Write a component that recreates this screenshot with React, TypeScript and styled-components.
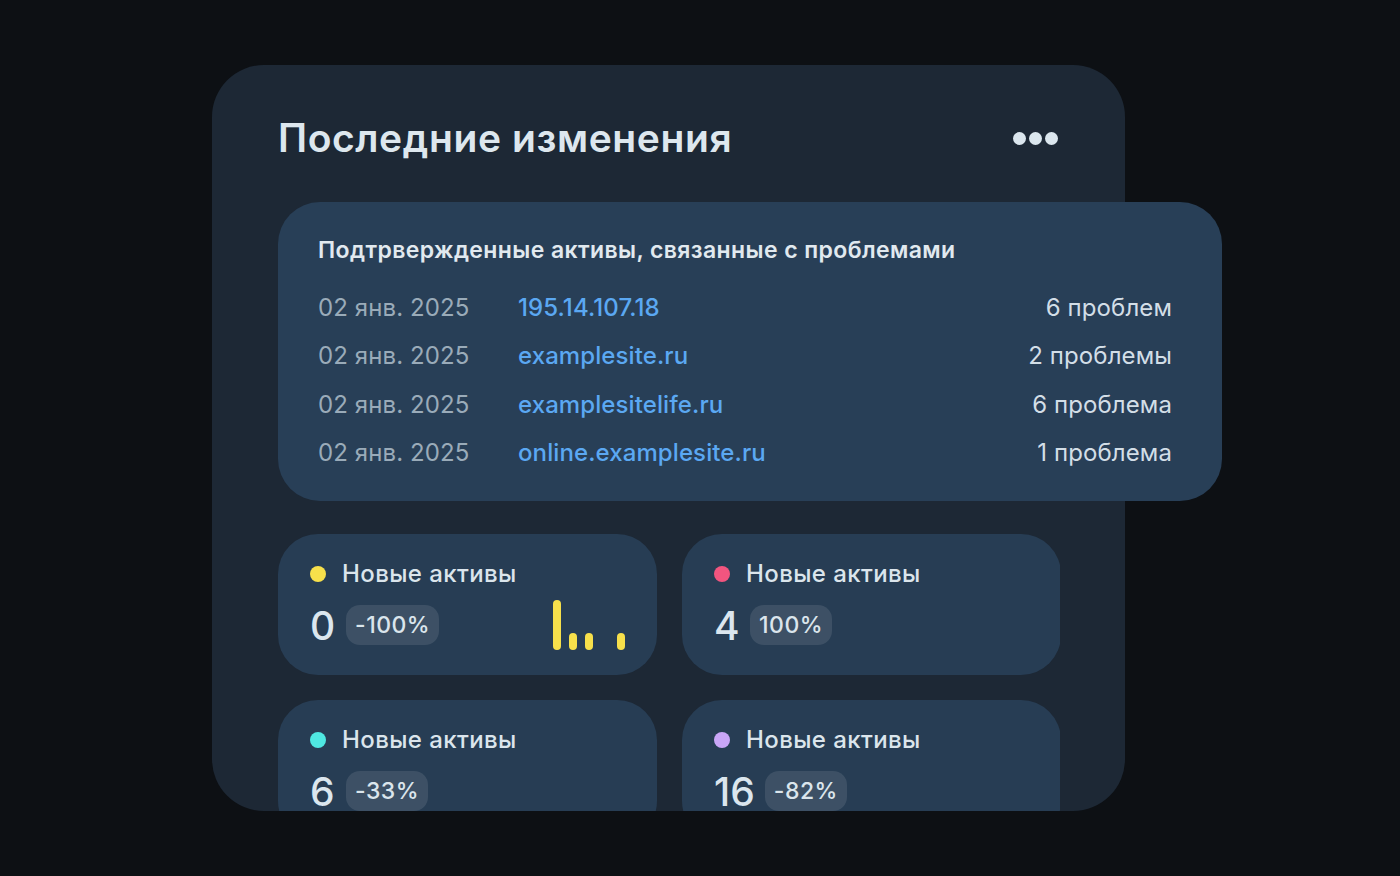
import React from 'react';
import styled, { createGlobalStyle } from 'styled-components';

const GlobalStyle = createGlobalStyle`
    html, body {
        margin: 0;
        padding: 0;
        background: #0d1014;
    }
    body {
        font-family: Inter, 'Noto Sans', sans-serif;
        -webkit-font-smoothing: antialiased;
    }
`;

interface IssueRow {
    date: string;
    host: string;
    count: string;
}

interface StatItem {
    color: string;
    value: string;
    change: string;
    bars?: number[];
}

const rows: IssueRow[] = [
    { date: '02 янв. 2025', host: '195.14.107.18', count: '6 проблем' },
    { date: '02 янв. 2025', host: 'examplesite.ru', count: '2 проблемы' },
    { date: '02 янв. 2025', host: 'examplesitelife.ru', count: '6 проблема' },
    { date: '02 янв. 2025', host: 'online.examplesite.ru', count: '1 проблема' },
];

const stats: StatItem[] = [
    { color: '#f7e04b', value: '0', change: '-100%', bars: [50, 17, 17, 0, 17] },
    { color: '#f2557f', value: '4', change: '100%' },
    { color: '#4fe8e2', value: '6', change: '-33%' },
    { color: '#c9a6f7', value: '16', change: '-82%' },
];

const App: React.FC = (): JSX.Element => {
    return (
        <Page>
            <GlobalStyle />
            <Card>
                <Header>
                    <Title>Последние изменения</Title>
                    <MoreButton aria-label="Ещё">
                        <Dot />
                        <Dot />
                        <Dot />
                    </MoreButton>
                </Header>
                <IssuesCard>
                    <IssuesTitle>Подтрвержденные активы, связанные с проблемами</IssuesTitle>
                    <IssuesList>
                        {rows.map((r) => (
                            <Row key={r.host}>
                                <DateCell>{r.date}</DateCell>
                                <HostCell>{r.host}</HostCell>
                                <CountCell>{r.count}</CountCell>
                            </Row>
                        ))}
                    </IssuesList>
                </IssuesCard>
                <StatsClip>
                    <StatsGrid>
                        {stats.map((s, i) => (
                            <StatCard key={i}>
                                <StatLabel>
                                    <Marker color={s.color} />
                                    Новые активы
                                </StatLabel>
                                <StatBottom>
                                    <StatValue>{s.value}</StatValue>
                                    <Badge>{s.change}</Badge>
                                    {s.bars && (
                                        <Bars>
                                            {s.bars.map((h, j) => (
                                                <Bar key={j} color={s.color} style={{ height: h }} />
                                            ))}
                                        </Bars>
                                    )}
                                </StatBottom>
                            </StatCard>
                        ))}
                    </StatsGrid>
                </StatsClip>
            </Card>
        </Page>
    );
};

export default App;

const Page = styled.div`
    width: 1400px;
    height: 876px;
    box-sizing: border-box;
    padding: 65px 0 0 212px;
    overflow: hidden;
`;

const Card = styled.section`
    width: 913px;
    height: 746px;
    box-sizing: border-box;
    padding: 50px 65px 0 66px;
    background: #1d2835;
    border-radius: 52px;
    display: flex;
    flex-direction: column;
`;

const Header = styled.div`
    display: flex;
    align-items: center;
    justify-content: space-between;
    height: 46px;
`;

const Title = styled.h1`
    margin: 0;
    font-size: 39px;
    line-height: 46px;
    font-weight: 600;
    color: #dde7ee;
    letter-spacing: 0.6px;
`;

const MoreButton = styled.div`
    display: flex;
    gap: 3px;
    margin-right: 2px;
`;

const Dot = styled.span`
    width: 13px;
    height: 13px;
    border-radius: 50%;
    background: #dbe6ee;
`;

const IssuesCard = styled.div`
    margin-top: 41px;
    margin-right: -162px;
    height: 299px;
    box-sizing: border-box;
    padding: 33px 50px 0 40px;
    background: #283f57;
    border-radius: 42px;
`;

const IssuesTitle = styled.h2`
    margin: 0;
    font-size: 23px;
    line-height: 30px;
    font-weight: 600;
    color: #e1e9ef;
    letter-spacing: 0.4px;
`;

const IssuesList = styled.div`
    margin-top: 18px;
    display: flex;
    flex-direction: column;
`;

const Row = styled.div`
    display: grid;
    grid-template-columns: 200px 1fr auto;
    align-items: center;
    height: 48.5px;
    font-size: 24px;
    letter-spacing: 0.1px;
`;

const DateCell = styled.span`
    color: #9aabb9;
`;

const HostCell = styled.span`
    color: #5ba8f2;
    font-weight: 500;
`;

const CountCell = styled.span`
    color: #d3dee7;
    text-align: right;
`;

const StatsClip = styled.div`
    margin-top: 33px;
    flex: 1;
    overflow: hidden;
`;

const StatsGrid = styled.div`
    display: grid;
    grid-template-columns: 379px 379px;
    grid-auto-rows: 141px;
    gap: 25px;
`;

const StatCard = styled.div`
    background: #273d54;
    border-radius: 40px;
    padding: 26px 32px 0 32px;
    box-sizing: border-box;
`;

const StatLabel = styled.div`
    display: flex;
    align-items: center;
    gap: 16px;
    font-size: 24px;
    line-height: 28px;
    font-weight: 500;
    color: #dbe5ec;
    letter-spacing: 0.4px;
`;

const Marker = styled.span<{ color: string }>`
    width: 16px;
    height: 16px;
    border-radius: 50%;
    background: ${(p) => p.color};
`;

const StatBottom = styled.div`
    display: flex;
    align-items: center;
    margin-top: 15px;
    height: 44px;
`;

const StatValue = styled.span`
    font-size: 39px;
    font-weight: 500;
    color: #dbe6ee;
    margin-right: 10px;
    min-width: 26px;
`;

const Badge = styled.span`
    display: inline-flex;
    align-items: center;
    height: 40px;
    padding: 0 9px;
    border-radius: 14px;
    background: rgba(255, 255, 255, 0.1);
    font-size: 23px;
    font-weight: 500;
    letter-spacing: 0.5px;
    color: #dbe5ec;
`;

const Bars = styled.div`
    margin-left: auto;
    display: flex;
    align-items: flex-end;
    gap: 8px;
    height: 50px;
    align-self: flex-end;
    margin-bottom: -3px;
`;

const Bar = styled.span<{ color: string }>`
    width: 8px;
    border-radius: 4px;
    background: ${(p) => p.color};
`;
